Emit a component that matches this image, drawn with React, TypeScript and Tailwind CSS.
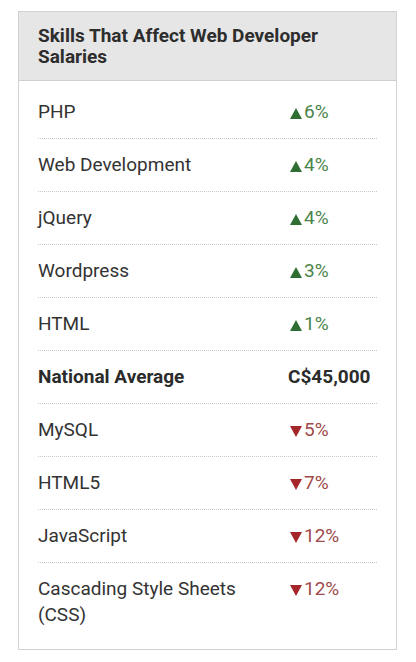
const rows: { name: string; value: string; dir?: 'up' | 'down' }[] = [
  { name: 'PHP', value: '6%', dir: 'up' },
  { name: 'Web Development', value: '4%', dir: 'up' },
  { name: 'jQuery', value: '4%', dir: 'up' },
  { name: 'Wordpress', value: '3%', dir: 'up' },
  { name: 'HTML', value: '1%', dir: 'up' },
  { name: 'National Average', value: 'C$45,000' },
  { name: 'MySQL', value: '5%', dir: 'down' },
  { name: 'HTML5', value: '7%', dir: 'down' },
  { name: 'JavaScript', value: '12%', dir: 'down' },
  { name: 'Cascading Style Sheets (CSS)', value: '12%', dir: 'down' },
];

function Arrow({ dir }: { dir: 'up' | 'down' }) {
  return (
    <svg width="12" height="11" viewBox="0 0 12 11" className="inline-block mr-[2px] align-[-1px]">
      {dir === 'up' ? (
        <path d="M6 0 L12 11 L0 11 Z" fill="#2f6e33" />
      ) : (
        <path d="M0 0 L12 0 L6 11 Z" fill="#a3262a" />
      )}
    </svg>
  );
}

export default function App() {
  return (
    <div className="bg-white pt-[11px] pl-[18px] w-[416px] h-[662px]" style={{ fontFamily: 'Roboto, "Liberation Sans", sans-serif' }}>
      <article className="w-[379px] border border-[#d2d2d2] bg-white">
        <header className="bg-[#e6e6e6] border-b border-[#cfcfcf] px-[19px] pt-[13px] pb-[13px]">
          <h2 className="text-[19px] leading-[21px] font-bold text-[#2d2d2d]">
            Skills That Affect Web Developer Salaries
          </h2>
        </header>
        <div className="px-[19px] pt-[5px] pb-[8px]">
          {rows.map((row, i) => (
            <div
              key={row.name}
              className={`flex py-[13px] text-[19px] leading-[26px] ${
                i < rows.length - 1 ? 'border-b border-dotted border-[#c8c8c8]' : ''
              } ${row.dir ? 'text-[#333333]' : 'font-bold text-[#2b2b2b]'}`}
            >
              <div className="w-[252px] pr-4">{row.name}</div>
              <div className="flex-1">
                {row.dir === 'up' && (
                  <span className="text-[#4a844a]">
                    <Arrow dir="up" />
                    {row.value}
                  </span>
                )}
                {row.dir === 'down' && (
                  <span className="text-[#a04a4a]">
                    <Arrow dir="down" />
                    {row.value}
                  </span>
                )}
                {!row.dir && <span className="-ml-[2px]">{row.value}</span>}
              </div>
            </div>
          ))}
        </div>
      </article>
    </div>
  );
}
